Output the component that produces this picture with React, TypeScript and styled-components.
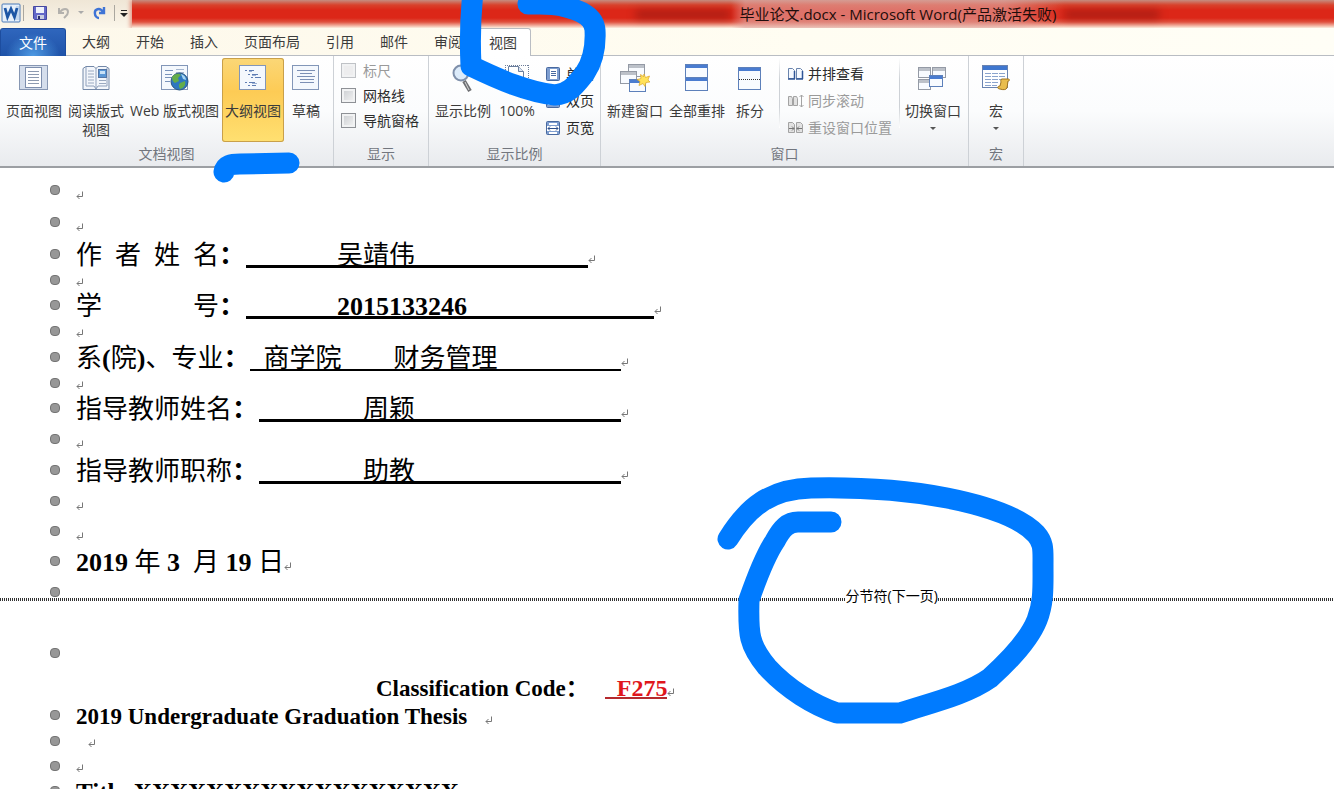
import React from "react";
import styled, { createGlobalStyle, css } from "styled-components";

const UI = `"Open Sans", "Noto Sans CJK SC", sans-serif`;
const BOOK = `"Liberation Serif", "Noto Sans CJK SC", serif`;

const GlobalStyle = createGlobalStyle`
  * { box-sizing: border-box; }
  body { margin: 0; background: #fff; overflow: hidden; }
  button { font: inherit; color: inherit; background: none; border: 0; padding: 0; }
  svg { display: block; flex: none; }
`;

const Shell = styled.div`
  position: relative;
  display: flex;
  flex-direction: column;
  height: 100vh;
  overflow: hidden;
  font: 14px/20px ${UI};
  color: #3b3b3b;
`;

/* ---------- title bar ---------- */

const TitleBar = styled.header`
  display: flex;
  height: 28px;
  background: linear-gradient(#efe6d6, #fbf6ea);
`;

const QuickAccess = styled.div`
  display: flex;
  align-items: center;
  flex: none;
  width: 132px;
  height: 26px;
  padding-left: 1px;
`;

const QuickButton = styled.button<{ $gap?: number }>`
  margin-left: ${(p) => p.$gap ?? 0}px;
`;

const QuickDivider = styled.span<{ $gap: number }>`
  width: 1px;
  height: 16px;
  margin-left: ${(p) => p.$gap}px;
  background: #aaa79f;
`;

const Caption = styled.div`
  flex: 1;
  display: grid;
  grid-template-columns: 607fr auto 273fr;
  align-items: center;
  height: 28px;
  background: linear-gradient(
    #c58d80 0,
    #d8422c 5px,
    #dc2718 10px,
    #dc2718 18px,
    #e0513f 22px,
    #f3b9a8 26px,
    #fbeee0 28px
  );
  box-shadow: -2px 0 4px #e59a88;
`;

const Smudge = styled.span<{ $side: "left" | "right" }>`
  width: 96px;
  height: 9px;
  border-radius: 4px;
  background: #7c1410;
  opacity: 0.5;
  filter: blur(4px);
  justify-self: ${(p) => (p.$side === "left" ? "end" : "start")};
`;

const DocTitle = styled.h1`
  margin: 0;
  padding: 0 8px;
  font: 15px/28px ${UI};
  color: #1e0d0b;
  white-space: nowrap;
  background: linear-gradient(
    90deg,
    transparent,
    rgba(224, 165, 160, 0.6) 14px,
    rgba(224, 165, 160, 0.6) calc(100% - 60px),
    transparent
  );
`;

/* ---------- tabs ---------- */

const Tabs = styled.nav`
  display: flex;
  height: 28px;
  background: linear-gradient(90deg, #fdf8ea, #fffdf2 60%, #fffef6);
  border-bottom: 1px solid #b9bdc3;
`;

const tabBase = css`
  height: 28px;
  line-height: 28px;
  text-align: center;
  white-space: nowrap;
`;

const FileTab = styled.button`
  ${tabBase}
  width: 66px;
  color: #fff;
  border: 1px solid #1d4d9f;
  border-bottom: 0;
  border-radius: 3px 3px 0 0;
  background: radial-gradient(ellipse at 50% 100%, #4f9be4, transparent 60%),
    linear-gradient(#2f66bd, #1f53a8);
  margin-right: 3px;
`;

const Tab = styled.button<{ $active?: boolean }>`
  ${tabBase}
  padding: 0 13px;
  ${(p) =>
    p.$active &&
    css`
      background: #fff;
      border: 1px solid #b9bdc3;
      border-bottom: 0;
      border-radius: 3px 3px 0 0;
    `}
`;

/* ---------- ribbon ---------- */

const Ribbon = styled.section`
  display: flex;
  flex: none;
  height: 112px;
  background: linear-gradient(#fff, #fbfcfd 50%, #e9ebee);
  border-bottom: 2px solid #9c9fa3;
`;

const Group = styled.section<{ $width: number }>`
  display: flex;
  flex-direction: column;
  flex: none;
  width: ${(p) => p.$width}px;
  border-right: 1px solid #cdd1d6;
`;

const Tools = styled.div<{ $pad?: number }>`
  display: flex;
  height: 88px;
  padding: 2px 0 2px ${(p) => p.$pad ?? 2}px;
`;

const GroupName = styled.h2`
  margin: 0;
  font: 14px/20px ${UI};
  color: #72767e;
  text-align: center;
`;

const BigButton = styled.button<{ $on?: boolean; $min?: number }>`
  display: flex;
  flex-direction: column;
  align-items: center;
  flex: none;
  min-width: ${(p) => p.$min ?? 0}px;
  height: 84px;
  padding: 4px 3px 0;
  line-height: 19px;
  white-space: pre;
  border-radius: 3px;
  ${(p) =>
    p.$on &&
    css`
      background: linear-gradient(#fbd777, #fdcb55 40%, #ffe071);
      box-shadow: inset 0 0 0 1px #c9a04a;
    `}
`;

const IconBox = styled.span`
  display: flex;
  align-items: center;
  justify-content: center;
  width: 36px;
  height: 32px;
  margin-bottom: 7px;
`;

const DropArrow = styled.span`
  margin-top: 7px;
  border: 3px solid transparent;
  border-top-color: #555;
`;

const SmallList = styled.div<{ $pitch: number; $left?: number; $top?: number }>`
  display: grid;
  grid-auto-rows: ${(p) => p.$pitch}px;
  align-content: start;
  margin-left: ${(p) => p.$left ?? 0}px;
  padding-top: ${(p) => p.$top ?? 0}px;
`;

const SmallButton = styled.button<{ $muted?: boolean }>`
  display: flex;
  align-items: center;
  gap: 4px;
  white-space: nowrap;
  color: ${(p) => (p.$muted ? "#9a9a9a" : "#2b2b2b")};
`;

const CheckLabel = styled.label<{ $muted?: boolean }>`
  display: flex;
  align-items: center;
  gap: 7px;
  color: ${(p) => (p.$muted ? "#9a9a9a" : "#2b2b2b")};
`;

const CheckBox = styled.input`
  appearance: none;
  width: 15px;
  height: 15px;
  margin: 0;
  border: 1px solid #8e9196;
  background: linear-gradient(135deg, #c9ccd0, #f5f5f5);
  box-shadow: inset 0 0 0 2px #f1f2f3;
  &:disabled { border-color: #bfc2c6; background: #ededee; }
`;

const ToolDivider = styled.span`
  flex: none;
  width: 1px;
  height: 70px;
  margin-left: 7px;
  margin-right: 2px;
  background: linear-gradient(#fff, #cdd1d6 30%, #cdd1d6 70%, #fff);
`;

/* ---------- document ---------- */

const Page = styled.main`
  flex: 1;
  padding-top: 12px;
  background: #fff;
  color: #000;
  font: 26px/23px ${BOOK};
`;

const Line = styled.div<{ $h: number; $size?: number }>`
  display: flex;
  align-items: flex-start;
  height: ${(p) => p.$h}px;
  padding-left: 50px;
  white-space: pre;
  font-size: ${(p) => p.$size ?? 26}px;
`;

const Bullet = styled.span<{ $hidden?: boolean }>`
  flex: none;
  width: 10px;
  height: 10px;
  margin: 5px 16px 0 0;
  border: 1px solid #747474;
  border-radius: 4px;
  background: #979797;
  visibility: ${(p) => (p.$hidden ? "hidden" : "visible")};
`;

const Blank = styled.span<{ $w: number; $thin?: boolean }>`
  width: ${(p) => p.$w}px;
  height: 24px;
  margin-left: 1px;
  border-bottom: ${(p) => (p.$thin ? 2 : 3)}px solid #000;
`;

const CodeIndent = styled.span`
  width: 300px;
`;

const Code = styled.b`
  height: 22px;
  margin-left: 16px;
  font-size: 24px;
  color: #e0161c;
  border-bottom: 2px solid #b52a2e;
`;

const Break = styled.div`
  display: grid;
  height: 61px;
`;

const BreakBullet = styled.div`
  grid-area: 1 / 1;
  padding-left: 50px;
  display: flex;
`;

const BreakRule = styled.div`
  grid-area: 1 / 1;
  display: flex;
  align-items: flex-start;
  margin-top: 4px;
  font: 14px/20px ${UI};
`;

const Dots = styled.span<{ $grow: number }>`
  flex: ${(p) => p.$grow} 0 0;
  height: 3px;
  margin-top: 12px;
  background: repeating-linear-gradient(90deg, #333 0 1px, #fff 1px 2px);
`;

const Ink = styled.svg`
  position: absolute;
  top: 0;
  left: 0;
  pointer-events: none;
`;

/* ---------- drawings ---------- */

const Mark = styled.svg<{ $tight?: boolean }>`
  margin-top: ${(p) => (p.$tight ? 8 : 11)}px;
`;

const Return = ({ tight = false }) => (
  <Mark $tight={tight} width="8" height="9" viewBox="0 0 8 9" fill="none" stroke="#777">
    <path d="M6.500 .5V5.500H1M3.500 3 1 5.500 3.500 8" />
  </Mark>
);

const Sheet = ({ x = 0, y = 0, w = 27, h = 25 }) => (
  <rect x={x + 0.5} y={y + 0.5} width={w} height={h} fill="#f4f8fd" stroke="#8296b8" />
);

const PageIcon = () => (
  <svg width="30" height="26">
    <rect x=".5" y=".5" width="28" height="24" fill="#d5deec" stroke="#8797b3" />
    <rect x="6.500" y="2.500" width="16" height="20" fill="#fff" stroke="#7e8fae" />
    <path d="M9 6.500h11M9 9.500h11M9 12.500h11M9 15.500h11M9 18.500h11" stroke="#8d9ab0" />
  </svg>
);

const ReadIcon = () => (
  <svg width="28" height="27">
    <path d="M1 3.500 4 1.500h8l2 2 2-2h8l3 2v21H1z" fill="#f3f6fb" stroke="#7388a8" />
    <path d="M14 3v21M4 2v19h8l2 3 2-3h9V3" fill="none" stroke="#8fa0bb" />
    <path d="M6 6h6M6 9h6M6 12h6M6 15h6M6 18h6M17 15.500h7M17 18.500h7" stroke="#9aa9c0" />
    <rect x="16.500" y="4.500" width="8" height="8" fill="#5a97d6" stroke="#5475a5" />
    <path d="M18 6h5v3h-5z" fill="#c8e1f7" />
  </svg>
);

const WebIcon = () => (
  <svg width="28" height="26">
    <Sheet w={26} h={24} />
    <path d="M4 5.500h8M4 9.500h7M4 12.500h7M4 16.500h5" stroke="#7892ba" />
    <path d="M15 4.500h8M15 7.500h8" stroke="#a6b7d0" />
    <circle cx="18.500" cy="16.500" r="8.500" fill="#2e77c0" stroke="#2c5680" />
    <path d="M11 12c3-4 7-4 9-2l-3 3 1 3-4 2c-2-1-3-3-3-6zM19 18l5-2c1 4-1 7-5 8-1-2-2-4 0-6z" fill="#63ac4a" />
    <path d="M20 9c3 1 5 3 5 6l-3-1z" fill="#a6d6f3" />
  </svg>
);

const OutlineIcon = () => (
  <svg width="28" height="26">
    <Sheet w={26} h={24} />
    <path d="M6 5.500h2m2 0h5M9 9.500h2m2 0h6M12 12.500h2m2 0h6M6 17.500h2m2 0h6M9 20.500h2m2 0h4" stroke="#5f7db3" />
    <path d="M10 6.500h3M13 10.500h4M13 18.500h5" stroke="#9db2d4" />
  </svg>
);

const DraftIcon = () => (
  <svg width="28" height="26">
    <Sheet w={26} h={24} />
    <path d="M5 5.500h18M8 8.500h12M5 11.500h18M8 14.500h14M8 17.500h14" stroke="#7b8fb4" />
  </svg>
);

const ZoomIcon = () => (
  <svg width="28" height="30">
    <path d="m15 18 6 10" stroke="#6e6f73" strokeWidth="4" />
    <path d="m16 19 4 8" stroke="#d7d7d7" strokeWidth="1" />
    <circle cx="12" cy="10" r="7.500" fill="#dcebfa" stroke="#7f90ab" strokeWidth="2" />
  </svg>
);

const HundredIcon = () => (
  <svg width="26" height="28">
    <path d="M1 1.500h23M1.500 1v24M24.500 1v24" stroke="#6c7c98" strokeDasharray="1 1" />
    <path d="M4.500 26V2.500h10l5 5V26z" fill="#fff" stroke="#6b7f9e" />
    <path d="M14.500 2.500v5h5" fill="#dbe4f1" stroke="#6b7f9e" />
  </svg>
);

type PaneProps = { x: number; y: number; w: number; h: number; grey?: boolean };

const Pane = ({ x, y, w, h, grey }: PaneProps) => (
  <g>
    <rect x={x + 0.5} y={y + 0.5} width={w - 1} height={h - 1} fill="#f8fbff" stroke={grey ? "#949aa5" : "#5d80ba"} />
    <rect x={x + 1} y={y + 1} width={w - 2} height="3" fill={grey ? "#bcc1c9" : "#4a7cd0"} />
  </g>
);

const NewWindowIcon = () => (
  <svg width="30" height="28">
    <Pane x={8} y={0} w={17} h={13} grey />
    <Pane x={0} y={7} w={17} h={13} grey />
    <Pane x={9} y={15} w={17} h={13} />
    <path d="m24 10 1.500 3.500 4-1.500-1.500 4 2 2-4 .5-1 4-2-3-4 2 1-4-3-2 4-1-.5-4 3 2z" fill="#ffe25a" stroke="#dda62a" strokeWidth=".7" />
  </svg>
);

const ArrangeIcon = () => (
  <svg width="24" height="28">
    <Pane x={0} y={0} w={23} h={14} />
    <Pane x={0} y={13} w={23} h={14} />
  </svg>
);

const SplitIcon = () => (
  <svg width="24" height="23">
    <Pane x={0} y={0} w={23} h={23} />
    <path d="M1 12.500h21" stroke="#333" strokeDasharray="1 1" />
  </svg>
);

const SwitchIcon = () => (
  <svg width="30" height="25">
    <Pane x={0} y={1} w={13} h={11} grey />
    <Pane x={14} y={1} w={14} h={11} grey />
    <Pane x={0} y={13} w={13} h={11} grey />
    <Pane x={11} y={9} w={14} h={12} />
  </svg>
);

const MacroIcon = () => (
  <svg width="28" height="26">
    <rect x=".5" y=".5" width="25" height="22" fill="#fff" stroke="#6a83b0" />
    <path d="M1 1h24v4H1z" fill="#3f77cf" />
    <path d="M3 8.500h6m1 0h6m1 0h6M3 11.500h6m1 0h6m1 0h6M3 14.500h6m1 0h6m1 0h3M3 17.500h6m1 0h6M3 20.500h6m1 0h5" stroke="#8ba4cd" />
    <path d="M18 24c3 1 6 1 7-1l1-7c2 0 2-2 0-2h-6c-2 0-1 3-1 3l-1 4c-3 0-3 3 0 3z" fill="#e9bd4c" stroke="#a07420" />
  </svg>
);

const FitIcon = ({ kind }: { kind: "one" | "two" | "wide" }) => (
  <svg width="16" height="14">
    <rect x=".5" y=".5" width="13" height="13" rx="1" fill="#7e9ed0" stroke="#48699f" />
    {kind === "one" && (
      <>
        <path d="M4 2h7v10H4z" fill="#fff" />
        <path d="M5 4.500h5M5 6.500h5M5 8.500h5" stroke="#48699f" />
      </>
    )}
    {kind === "two" && <path d="M2 3h4v8H2zM8 3h4v8H8z" fill="#fff" />}
    {kind === "wide" && (
      <>
        <path d="M3 2h8v2H3zM1 5h12v5H1zM3 11h8v2H3z" fill="#fff" />
        <path d="M2 7.500h10M4 5.500l-2 2 2 2M10 5.500l2 2-2 2" stroke="#2c4f8c" fill="none" />
      </>
    )}
  </svg>
);

const SideIcon = () => (
  <svg width="16" height="14" fill="#f5f9ff" stroke="#6a84ad">
    <path d="M.5 1.500H4.500L6.500 3.500V11.500H.5zM8.500 1.500H12.500L14.500 3.500V11.500H8.500z" />
    <path d="M6.500 4v8M14.500 4v8M0 12h7M8 12h7" stroke="#2f5597" strokeWidth="1.500" />
  </svg>
);

const SyncIcon = () => (
  <svg width="16" height="14" fill="#e2e2e2" stroke="#a3a3a3">
    <path d="M.5 2.500H3.500L4.500 4.500V11.500H.5zM5.500 2.500H8.500L9.500 4.500V11.500H5.500z" />
    <path d="M13.500 1v12M11.500 3l2-2 2 2M11.500 11l2 2 2-2" fill="none" />
  </svg>
);

const ResetIcon = () => (
  <svg width="16" height="14" fill="#e2e2e2" stroke="#a3a3a3">
    <path d="M.5 1.500H4.500L6.500 3.500V11.500H.5zM8.500 1.500H12.500L14.500 3.500V11.500H8.500z" />
    <path d="M1 7.500h5M4 5.500l2 2-2 2M14 7.500H9M11 5.500l-2 2 2 2" stroke="#777" fill="none" />
  </svg>
);

const WordIcon = () => (
  <svg width="20" height="20">
    <rect x="1" y="1" width="18" height="18" rx="1" fill="#e7f0fa" stroke="#4a7ab8" />
    <path d="M15 3h3v14h-3z" fill="#c5d8ee" />
    <path d="m4 5 2.500 9L10 6l3.500 8L16 5" fill="none" stroke="#1d56a5" strokeWidth="2.800" />
  </svg>
);

const SaveIcon = () => (
  <svg width="14" height="14">
    <path d="M.5 .5h13v13h-12l-1-1z" fill="#6468c8" stroke="#4548a0" />
    <path d="M3 1h8v6H3z" fill="#eef1fb" />
    <path d="M4 9h7v4H4z" fill="#c9cde0" />
    <path d="M5 10h2v3H5z" fill="#2b2e6b" />
  </svg>
);

const UndoIcon = () => (
  <svg width="12" height="14" fill="none" stroke="#b3b1ad" strokeWidth="2">
    <path d="M1 2v5h5M2 6c3-4 8-4 8 0 0 3-2 4-4 6" />
  </svg>
);

const RedoIcon = () => (
  <svg width="13" height="14" fill="none" stroke="#3f74d6" strokeWidth="2.400">
    <path d="M11 1v6H6M10 6C7 1 1 3 2 8c0 2 2 4 4 4" />
  </svg>
);

const inkStrokes = [
  "M473-8C470 20 470 45 471 66C500 80 528 92 555 95C570 94 576 84 585 73C593 61 596 48 595 30C594 16 580 10 562 6C552 3 540 4 528 4",
  "M224 172C225 165 231 164 240 164L289 163",
  "M728 539C748 507 770 489 811 488C857 487 905 490 947 498C987 506 1021 518 1036 534C1044 543 1043 550 1043 565C1043 586 1044 602 1037 620C1029 640 1010 660 990 678C966 695 930 703 900 713H837C815 706 787 689 767 667C749 645 748 635 749 600C757 577 765 556 775 541C782 528 788 522 798 522H831",
];

const tabs = ["大纲", "开始", "插入", "页面布局", "引用", "邮件", "审阅"];

const Empty = ({ h, lead }: { h: number; lead?: string }) => (
  <Line $h={h} $size={23}>
    <Bullet />
    {lead && <span>{lead}</span>}
    <Return tight={h <= 26} />
  </Line>
);

export default function App() {
  return (
    <Shell>
      <GlobalStyle />
      <TitleBar>
        <QuickAccess>
          <WordIcon />
          <QuickDivider $gap={2} />
          <QuickButton $gap={9} aria-label="保存"><SaveIcon /></QuickButton>
          <QuickButton $gap={11} aria-label="撤消"><UndoIcon /></QuickButton>
          <QuickButton $gap={8} aria-label="撤消列表">
            <svg width="6" height="4"><path d="M0 0h6L3 3z" fill="#aaa" /></svg>
          </QuickButton>
          <QuickButton $gap={9} aria-label="恢复"><RedoIcon /></QuickButton>
          <QuickDivider $gap={8} />
          <QuickButton $gap={5} aria-label="自定义快速访问工具栏">
            <svg width="8" height="8"><path d="M1 1.500h6" stroke="#222" /><path d="M0 4h8L4 8z" fill="#222" /></svg>
          </QuickButton>
        </QuickAccess>
        <Caption>
          <Smudge $side="left" />
          <DocTitle>毕业论文.docx - Microsoft Word(产品激活失败)</DocTitle>
          <Smudge $side="right" />
        </Caption>
      </TitleBar>

      <Tabs>
        <FileTab>文件</FileTab>
        {tabs.map((t) => (
          <Tab key={t}>{t}</Tab>
        ))}
        <Tab $active>视图</Tab>
      </Tabs>

      <Ribbon>
        <Group $width={334}>
          <Tools $pad={3}>
            <BigButton><IconBox><PageIcon /></IconBox>页面视图</BigButton>
            <BigButton><IconBox><ReadIcon /></IconBox>{"阅读版式\n视图"}</BigButton>
            <BigButton><IconBox><WebIcon /></IconBox>Web 版式视图</BigButton>
            <BigButton $on><IconBox><OutlineIcon /></IconBox>大纲视图</BigButton>
            <BigButton $min={44}><IconBox><DraftIcon /></IconBox>草稿</BigButton>
          </Tools>
          <GroupName>文档视图</GroupName>
        </Group>
        <Group $width={95}>
          <Tools $pad={7}>
            <SmallList $pitch={25}>
              <CheckLabel $muted><CheckBox type="checkbox" disabled />标尺</CheckLabel>
              <CheckLabel><CheckBox type="checkbox" />网格线</CheckLabel>
              <CheckLabel><CheckBox type="checkbox" />导航窗格</CheckLabel>
            </SmallList>
          </Tools>
          <GroupName>显示</GroupName>
        </Group>
        <Group $width={172}>
          <Tools $pad={3}>
            <BigButton><IconBox><ZoomIcon /></IconBox>显示比例</BigButton>
            <BigButton $min={46}><IconBox><HundredIcon /></IconBox>100%</BigButton>
            <SmallList $pitch={27} $left={6} $top={2}>
              <SmallButton><FitIcon kind="one" />单页</SmallButton>
              <SmallButton><FitIcon kind="two" />双页</SmallButton>
              <SmallButton><FitIcon kind="wide" />页宽</SmallButton>
            </SmallList>
          </Tools>
          <GroupName>显示比例</GroupName>
        </Group>
        <Group $width={368}>
          <Tools $pad={3}>
            <BigButton><IconBox><NewWindowIcon /></IconBox>新建窗口</BigButton>
            <BigButton><IconBox><ArrangeIcon /></IconBox>全部重排</BigButton>
            <BigButton $min={44}><IconBox><SplitIcon /></IconBox>拆分</BigButton>
            <ToolDivider />
            <SmallList $pitch={27} $left={6} $top={2}>
              <SmallButton><SideIcon />并排查看</SmallButton>
              <SmallButton $muted><SyncIcon />同步滚动</SmallButton>
              <SmallButton $muted><ResetIcon />重设窗口位置</SmallButton>
            </SmallList>
            <ToolDivider />
            <BigButton><IconBox><SwitchIcon /></IconBox>切换窗口<DropArrow /></BigButton>
          </Tools>
          <GroupName>窗口</GroupName>
        </Group>
        <Group $width={55}>
          <Tools $pad={5}>
            <BigButton $min={44}><IconBox><MacroIcon /></IconBox>宏<DropArrow /></BigButton>
          </Tools>
          <GroupName>宏</GroupName>
        </Group>
      </Ribbon>

      <Page>
        <Empty h={32} />
        <Empty h={32} />
        <Line $h={26}><Bullet />作  者  姓  名<b>：</b><Blank $w={342}>{" ".repeat(14)}吴靖伟</Blank><Return /></Line>
        <Empty h={25} />
        <Line $h={26}><Bullet />学{" ".repeat(14)}号<b>：</b><Blank $w={408}><b>{" ".repeat(14)}2015133246</b></Blank><Return /></Line>
        <Empty h={26} />
        <Line $h={26}><Bullet />系<b>(</b>院<b>)</b>、专业<b>：</b><Blank $w={371} $thin>{"  商学院" + " ".repeat(8) + "财务管理"}</Blank><Return /></Line>
        <Empty h={25} />
        <Line $h={31}><Bullet />指导教师姓名<b>：</b><Blank $w={362}>{" ".repeat(16)}周颖</Blank><Return /></Line>
        <Empty h={31} />
        <Line $h={31}><Bullet />指导教师职称<b>：</b><Blank $w={362}>{" ".repeat(16)}助教</Blank><Return /></Line>
        <Empty h={30} />
        <Empty h={30} />
        <Line $h={31}><Bullet /><b>2019</b> 年 <b>3</b>  月 <b>19</b> 日<Return /></Line>
        <Break>
          <BreakBullet><Bullet /></BreakBullet>
          <BreakRule><Dots $grow={841} />分节符(下一页)<Dots $grow={394} /></BreakRule>
        </Break>
        <Line $h={34}><Bullet /></Line>
        <Line $h={28} $size={23}><Bullet $hidden /><CodeIndent /><b>Classification Code：</b><Code>  F275</Code><Return /></Line>
        <Line $h={26} $size={23}><Bullet /><b>2019 Undergraduate Graduation Thesis   </b><Return /></Line>
        <Empty h={25} lead="  " />
        <Empty h={25} />
        <Line $h={26} $size={25}><Bullet /><b>Title:XXXXXXXXXXXXXXXXXX</b></Line>
      </Page>

      <Ink width="1100" height="760" fill="none" stroke="#007bff" strokeWidth="21" strokeLinecap="round" strokeLinejoin="round">
        {inkStrokes.map((d) => (
          <path key={d} d={d} />
        ))}
      </Ink>
    </Shell>
  );
}
